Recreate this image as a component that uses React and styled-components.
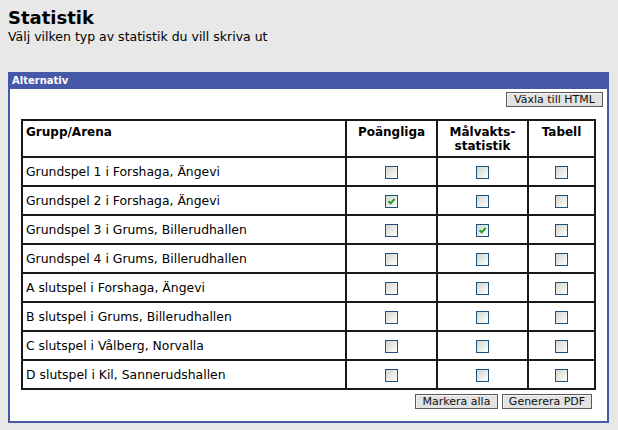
import React from "react";
import styled, { createGlobalStyle } from "styled-components";

const Global = createGlobalStyle`
  html, body { margin: 0; padding: 0; background: #e8e8e8; }
  body { font-family: Verdana, "DejaVu Sans", sans-serif; color: #000; }
`;

const Page = styled.div`
  padding: 7px 8px 0 8px;
`;

const Title = styled.h1`
  margin: 0;
  font-size: 18px;
  line-height: 22px;
  font-weight: bold;
`;

const Subtitle = styled.div`
  font-size: 12.5px;
  line-height: 16px;
`;

const Panel = styled.div`
  margin-top: 27px;
  width: 601px;
  box-sizing: border-box;
  border: 2px solid #4658a8;
  background: #fff;
`;

const PanelHeader = styled.div`
  background: #4658a8;
  color: #fff;
  font-size: 10px;
  font-weight: bold;
  height: 15px;
  line-height: 13px;
  padding-left: 2px;
`;

const PanelBody = styled.div`
  padding: 3px 4px 12px 11px;
  display: flex;
  flex-direction: column;
`;

const ButtonRow = styled.div`
  display: flex;
  justify-content: flex-end;
  gap: 4px;
  padding-right: ${(p) => p.$inset || 0}px;
  margin-top: ${(p) => p.$top || 0}px;
`;

const Button = styled.button`
  font-family: Verdana, "DejaVu Sans", sans-serif;
  font-size: 11px;
  color: #111;
  background: #e2e2e2;
  border: 1px solid #5a5a5a;
  box-shadow: inset 1px 1px 0 #f4f4f4;
  height: ${(p) => p.$h || 15}px;
  width: ${(p) => p.$w}px;
  padding: 0;
  margin: 0;
  line-height: 12px;
`;

const Table = styled.table`
  margin-top: 12px;
  width: 575px;
  table-layout: fixed;
  border-collapse: separate;
  border-spacing: 0;
  border: 1px solid #1a1a1a;
  font-size: 12.4px;
`;

const Th = styled.th`
  border: 1px solid #1a1a1a;
  height: 31px;
  vertical-align: top;
  text-align: ${(p) => (p.$left ? "left" : "center")};
  padding: 4px 4px 0 ${(p) => (p.$left ? 3 : 4)}px;
  font-weight: bold;
  font-size: 12px;
  line-height: 14px;
`;

const Td = styled.td`
  border: 1px solid #1a1a1a;
  height: 27px;
  padding: 0 4px 0 ${(p) => (p.$left ? 3 : 4)}px;
  text-align: ${(p) => (p.$left ? "left" : "center")};
  vertical-align: middle;
`;

const Box = styled.span`
  display: inline-block;
  width: 11px;
  height: 11px;
  border: 1px solid #1c5180;
  background: linear-gradient(135deg, #d6d6d0 0%, #f0f0ec 65%, #ffffff 100%);
  vertical-align: middle;
  position: relative;
  svg { position: absolute; left: 1px; top: 1px; }
`;

const Check = ({ on }) => (
  <Box>
    {on && (
      <svg width="9" height="9" viewBox="0 0 9 9">
        <path d="M1.5 4.2 L3.6 6.4 L7.6 2" stroke="#21a121" strokeWidth="2" fill="none" />
      </svg>
    )}
  </Box>
);

const rows = [
  ["Grundspel 1 i Forshaga, Ängevi", false, false, false],
  ["Grundspel 2 i Forshaga, Ängevi", true, false, false],
  ["Grundspel 3 i Grums, Billerudhallen", false, true, false],
  ["Grundspel 4 i Grums, Billerudhallen", false, false, false],
  ["A slutspel i Forshaga, Ängevi", false, false, false],
  ["B slutspel i Grums, Billerudhallen", false, false, false],
  ["C slutspel i Vålberg, Norvalla", false, false, false],
  ["D slutspel i Kil, Sannerudshallen", false, false, false],
];

export default function App() {
  return (
    <>
      <Global />
      <Page>
        <Title>Statistik</Title>
        <Subtitle>Välj vilken typ av statistik du vill skriva ut</Subtitle>
        <Panel>
          <PanelHeader>Alternativ</PanelHeader>
          <PanelBody>
            <ButtonRow>
              <Button $w={97}>Växla till HTML</Button>
            </ButtonRow>
            <Table>
              <colgroup>
                <col />
                <col style={{ width: 91 }} />
                <col style={{ width: 91 }} />
                <col style={{ width: 67 }} />
              </colgroup>
              <thead>
                <tr>
                  <Th $left>Grupp/Arena</Th>
                  <Th>Poängliga</Th>
                  <Th>Målvakts-<br />statistik</Th>
                  <Th>Tabell</Th>
                </tr>
              </thead>
              <tbody>
                {rows.map(([name, a, b, c]) => (
                  <tr key={name}>
                    <Td $left>{name}</Td>
                    <Td><Check on={a} /></Td>
                    <Td><Check on={b} /></Td>
                    <Td><Check on={c} /></Td>
                  </tr>
                ))}
              </tbody>
            </Table>
            <ButtonRow $inset={11} $top={4}>
              <Button $w={83}>Markera alla</Button>
              <Button $w={90}>Generera PDF</Button>
            </ButtonRow>
          </PanelBody>
        </Panel>
      </Page>
    </>
  );
}
